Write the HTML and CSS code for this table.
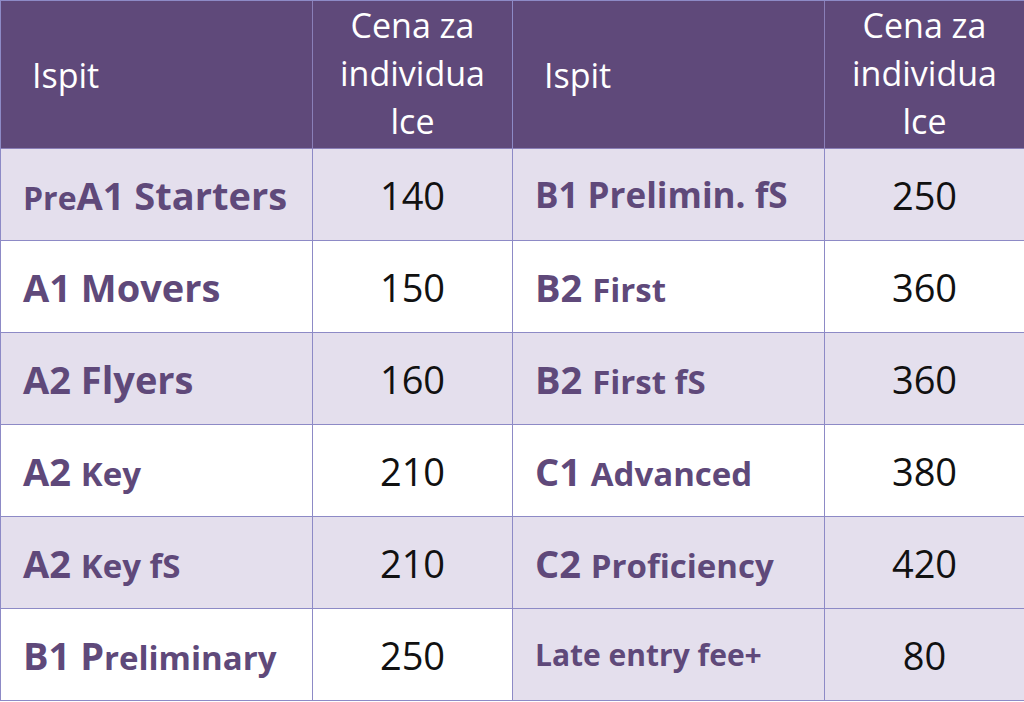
FILE: index.html
```html
<!DOCTYPE html>
<html lang="sr">
<head>
<meta charset="utf-8">
<title>Cene ispita</title>
<link rel="stylesheet" href="styles.css">
</head>
<body>
<main class="page">
  <section class="price-table">
    <div class="cell head name"><span>Ispit</span></div>
    <div class="cell head price"><span>Cena za<br>individua<br>lce</span></div>

    <div class="cell name alt"><span><span class="sm2">Pre</span><span class="md">A1 Starters</span></span></div>
    <div class="cell price alt">140</div>

    <div class="cell name"><span class="lg">A1 Movers</span></div>
    <div class="cell price">150</div>

    <div class="cell name alt"><span class="lg">A2 Flyers</span></div>
    <div class="cell price alt">160</div>

    <div class="cell name"><span><span class="lg">A2 </span><span class="sm">Key</span></span></div>
    <div class="cell price">210</div>

    <div class="cell name alt"><span><span class="lg">A2 </span><span class="sm">Key fS</span></span></div>
    <div class="cell price alt">210</div>

    <div class="cell name"><span><span class="lg">B1 P</span><span class="sm">reliminary</span></span></div>
    <div class="cell price">250</div>
  </section>

  <section class="price-table">
    <div class="cell head name"><span>Ispit</span></div>
    <div class="cell head price"><span>Cena za<br>individua<br>lce</span></div>

    <div class="cell name alt"><span class="md2">B1 Prelimin. fS</span></div>
    <div class="cell price alt">250</div>

    <div class="cell name"><span><span class="lg">B2 </span><span class="sm">First</span></span></div>
    <div class="cell price">360</div>

    <div class="cell name alt"><span><span class="lg">B2 </span><span class="sm">First fS</span></span></div>
    <div class="cell price alt">360</div>

    <div class="cell name"><span><span class="lg">C1 </span><span class="sm">Advanced</span></span></div>
    <div class="cell price">380</div>

    <div class="cell name alt"><span><span class="lg">C2 </span><span class="sm">Proficiency</span></span></div>
    <div class="cell price alt">420</div>

    <div class="cell name alt"><span class="xs">Late entry fee+</span></div>
    <div class="cell price alt">80</div>
  </section>
</main>
</body>
</html>
```

FILE: styles.css
```css
html, body {
  margin: 0;
  padding: 0;
  background: #ffffff;
}

.page {
  display: flex;
  width: 1024px;
  height: 702px;
  font-family: "Open Sans", "Liberation Sans", sans-serif;
}

.price-table {
  display: grid;
  grid-template-columns: 312px 200px;
  grid-template-rows: 148px repeat(6, 92px);
  border-top: 1px solid #8d8ac6;
  border-left: 1px solid #8d8ac6;
  width: 512px;
  box-sizing: border-box;
  height: 701px;
}

.cell {
  box-sizing: border-box;
  border-right: 1px solid #8d8ac6;
  border-bottom: 1px solid #8d8ac6;
  display: flex;
  align-items: center;
  background: #ffffff;
  white-space: nowrap;
}

.cell.alt {
  background: #e4dfed;
}

.cell.head {
  background: #5f497a;
  color: #ffffff;
  font-size: 34px;
  line-height: 48px;
  border-right-color: #8a7fb8;
  border-bottom-color: #8a7fb8;
}

.name {
  padding-left: 22px;
  color: #5f497a;
  font-weight: 700;
}

.head.name {
  padding-left: 31px;
  font-weight: 400;
}

.price {
  justify-content: center;
  text-align: center;
  font-size: 38px;
  color: #111111;
}

.head.price {
  padding-bottom: 4px;
}

.lg {
  font-size: 38px;
}

.md {
  font-size: 38px;
}

.md2 {
  font-size: 35px;
}

.sm {
  font-size: 33px;
}

.sm2 {
  font-size: 32px;
}

.xs {
  font-size: 30px;
}
```
